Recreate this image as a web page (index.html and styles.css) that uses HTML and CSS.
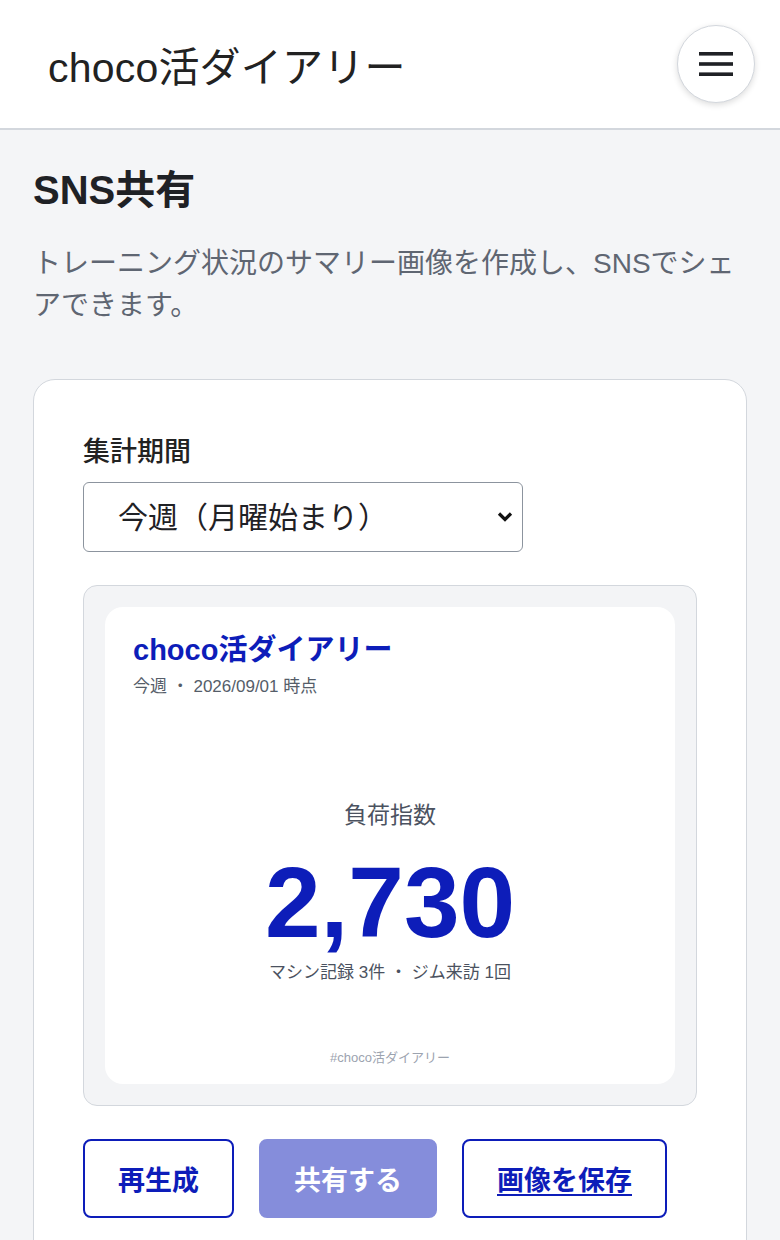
FILE: index.html
```html
<!DOCTYPE html>
<html lang="ja">
<head>
  <meta charset="UTF-8">
  <title>SNS共有 - choco活ダイアリー</title>
  <link rel="stylesheet" href="styles.css">
</head>
<body>

  <!-- ヘッダー -->
  <header class="app-header">
    <div class="app-title">choco活ダイアリー</div>
    <button class="menu-button" aria-label="メニュー">
      <svg width="34" height="26" viewBox="0 0 34 26">
        <rect x="0" y="1" width="34" height="3.6" fill="#1f2125"/>
        <rect x="0" y="11.2" width="34" height="3.6" fill="#1f2125"/>
        <rect x="0" y="21.4" width="34" height="3.6" fill="#1f2125"/>
      </svg>
    </button>
  </header>

  <main class="page">
    <h1 class="page-title">SNS共有</h1>
    <p class="page-desc">トレーニング状況のサマリー画像を作成し、SNSでシェアできます。</p>

    <section class="share-card">
      <label class="field-label" for="period">集計期間</label>
      <div class="select-wrap">
        <select id="period" class="period-select">
          <option>今週（月曜始まり）</option>
          <option>今月</option>
          <option>全期間</option>
        </select>
        <svg class="select-arrow" width="16" height="11" viewBox="0 0 16 11">
          <path d="M2 2.5 L8 8.5 L14 2.5" fill="none" stroke="#111" stroke-width="3.2"/>
        </svg>
      </div>

      <!-- プレビュー -->
      <div class="preview">
        <div class="summary">
          <div class="summary-head">
            <div class="summary-title">choco活ダイアリー</div>
            <div class="summary-sub">今週 ・ 2026/09/01 時点</div>
          </div>
          <div class="summary-body">
            <div class="summary-label">負荷指数</div>
            <div class="summary-value">2,730</div>
            <div class="summary-stats">マシン記録 3件 ・ ジム来訪 1回</div>
          </div>
          <div class="summary-tag">#choco活ダイアリー</div>
        </div>
      </div>

      <div class="actions">
        <button class="btn btn-outline">再生成</button>
        <button class="btn btn-primary" disabled>共有する</button>
        <a class="btn btn-outline btn-link" href="#">画像を保存</a>
      </div>
    </section>
  </main>

</body>
</html>
```

FILE: styles.css
```css
body {
  margin: 0;
  background-color: #f4f5f7;
  color: #1f2125;
  font-family: "Liberation Sans", "Noto Sans CJK JP", sans-serif;
}

.app-header {
  display: flex;
  align-items: center;
  justify-content: space-between;
  height: 128px;
  padding: 0 25px 0 48px;
  background-color: #ffffff;
  border-bottom: 2px solid #d3d7dd;
}

.app-title {
  font-size: 41px;
  color: #222;
  letter-spacing: 0.2px;
}

.menu-button {
  display: flex;
  align-items: center;
  justify-content: center;
  width: 78px;
  height: 78px;
  padding: 0;
  border: 1.5px solid #d3d7dd;
  border-radius: 50%;
  background-color: #ffffff;
  box-shadow: 0 2px 6px rgba(0, 0, 0, 0.14);
}

.page {
  padding: 36px 33px 0;
}

.page-title {
  margin: 0;
  font-size: 40px;
  line-height: 48px;
  font-weight: 700;
}

.page-desc {
  margin: 29px 0 0;
  font-size: 28px;
  line-height: 42px;
  color: #5f6672;
}

.share-card {
  margin-top: 52px;
  padding: 52px 49px 60px;
  background-color: #ffffff;
  border: 1.5px solid #d3d7dd;
  border-radius: 22px;
}

.field-label {
  display: block;
  font-size: 27px;
  line-height: 40px;
  font-weight: 500;
  color: #222;
}

.select-wrap {
  position: relative;
  width: 440px;
  margin-top: 10px;
}

.period-select {
  width: 100%;
  height: 70px;
  padding: 0 34px;
  font-family: inherit;
  font-size: 30px;
  color: #1f2125;
  background-color: #ffffff;
  border: 1.5px solid #8c949e;
  border-radius: 6px;
  appearance: none;
  -webkit-appearance: none;
}

.select-arrow {
  position: absolute;
  right: 10px;
  top: 29px;
  pointer-events: none;
}

.preview {
  margin-top: 33px;
  padding: 21px;
  background-color: #f3f4f6;
  border: 1.5px solid #d3d7dd;
  border-radius: 14px;
}

.summary {
  display: flex;
  flex-direction: column;
  height: 477px;
  padding: 26px 28px 18px;
  box-sizing: border-box;
  background-color: #ffffff;
  border-radius: 18px;
}

.summary-title {
  font-size: 29px;
  line-height: 34px;
  font-weight: 700;
  color: #0d1db9;
}

.summary-sub {
  margin-top: 5px;
  font-size: 17px;
  color: #555d69;
}

.summary-body {
  flex: 1;
  display: flex;
  flex-direction: column;
  align-items: center;
  justify-content: center;
  padding-top: 34px;
}

.summary-label {
  font-size: 23px;
  color: #4b5260;
}

.summary-value {
  margin-top: 20px;
  font-size: 100px;
  line-height: 104px;
  font-weight: 700;
  color: #0d1db9;
}

.summary-stats {
  margin-top: 4px;
  font-size: 17px;
  color: #4b5260;
}

.summary-tag {
  text-align: center;
  font-size: 13px;
  color: #9ca3af;
}

.actions {
  display: flex;
  gap: 25px;
  margin-top: 33px;
}

.btn {
  display: flex;
  align-items: center;
  justify-content: center;
  height: 79px;
  padding: 0 33px;
  box-sizing: border-box;
  font-family: inherit;
  font-size: 27px;
  font-weight: 700;
  border-radius: 8px;
}

.btn-outline {
  color: #0d1db9;
  background-color: #ffffff;
  border: 2px solid #0d1db9;
}

.btn-primary {
  color: #ffffff;
  background-color: #0d1db9;
  border: 2px solid #0d1db9;
  opacity: 0.5;
}

.btn-link {
  text-decoration: underline;
  text-underline-offset: 4px;
}
```
